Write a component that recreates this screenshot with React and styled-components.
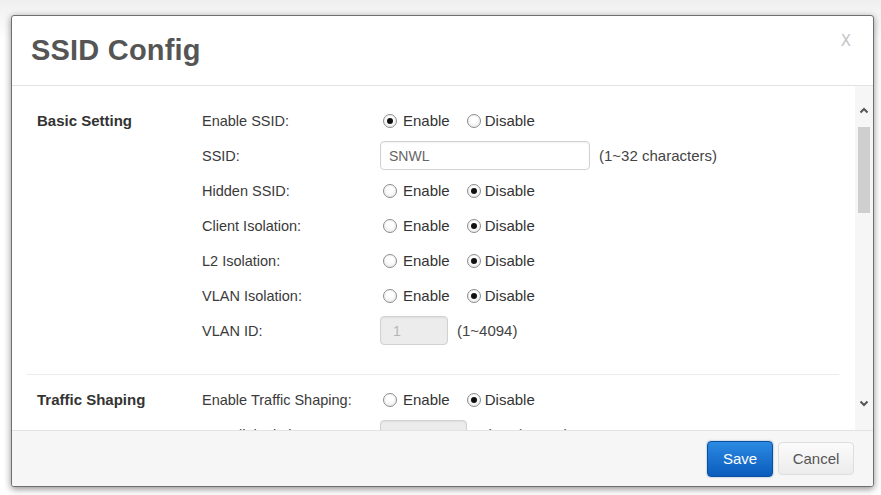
import React from "react";
import styled, { createGlobalStyle } from "styled-components";

const GlobalStyle = createGlobalStyle`
  html, body { margin: 0; padding: 0; background: #ffffff; }
  body { font-family: "Liberation Sans", Arial, sans-serif; color: #333; }
  * { box-sizing: border-box; }
`;

const Page = styled.div`
  width: 881px;
  height: 495px;
  padding: 15px 7px 8px 11px;
  background: linear-gradient(#efefef, #ffffff 40px);
`;

const Dialog = styled.div`
  width: 863px;
  height: 472px;
  display: flex;
  flex-direction: column;
  background: #fff;
  border: 1px solid #6f6f6f;
  border-radius: 3px;
  box-shadow: 0 2px 7px rgba(0, 0, 0, 0.45);
  overflow: hidden;
`;

const Header = styled.div`
  height: 70px;
  flex: none;
  display: flex;
  align-items: center;
  justify-content: space-between;
  padding: 0 22px 0 19px;
  border-bottom: 1px solid #e2e2e2;
`;

const Title = styled.h2`
  margin: 0;
  font-family: "Liberation Sans", Arial, sans-serif;
  font-weight: bold;
  font-size: 29px;
  color: #555;
  letter-spacing: 0.2px;
`;

const Close = styled.span`
  align-self: flex-start;
  margin-top: 16px;
  font-size: 15px;
  color: #c4c4c4;
  font-family: "DejaVu Sans", sans-serif;
`;

const Body = styled.div`
  flex: 1;
  min-height: 0;
  display: flex;
`;

const Content = styled.div`
  flex: 1;
  overflow: hidden;
`;

const Section = styled.div`
  display: flex;
  margin: 0 16px 0 15px;
  padding: ${(p) => p.$pad};
  border-bottom: ${(p) => (p.$divider ? "1px solid #ececec" : "none")};
`;

const SectionTitle = styled.div`
  width: 175px;
  flex: none;
  height: 35px;
  display: flex;
  align-items: center;
  padding-left: 10px;
  font-weight: bold;
  font-size: 15px;
  color: #333;
`;

const Fields = styled.div`
  display: flex;
  flex-direction: column;
`;

const Row = styled.div`
  height: 35px;
  display: flex;
  align-items: center;
`;

const Label = styled.div`
  width: 178px;
  flex: none;
  font-size: 14.5px;
  color: #3a3a3a;
`;

const Controls = styled.div`
  display: flex;
  align-items: center;
`;

const RadioOption = styled.label`
  display: flex;
  align-items: center;
  font-size: 15px;
  color: #333;
  margin-left: ${(p) => p.$ml}px;
`;

const Circle = styled.span`
  width: 14px;
  height: 14px;
  border-radius: 50%;
  border: 1px solid #8c8c8c;
  background: radial-gradient(circle at 50% 40%, #ffffff 30%, #e2e2e2 100%);
  display: flex;
  align-items: center;
  justify-content: center;
  margin-right: ${(p) => p.$gap}px;
  &::after {
    content: "";
    width: 6px;
    height: 6px;
    border-radius: 50%;
    background: ${(p) => (p.$checked ? "#111" : "transparent")};
  }
`;

const TextInput = styled.div`
  width: ${(p) => p.$w}px;
  height: 29px;
  border: 1px solid #d2d2d2;
  border-radius: 4px;
  background: ${(p) => (p.$disabled ? "#ececec" : "#fff")};
  box-shadow: inset 0 1px 2px rgba(0, 0, 0, 0.06);
  display: flex;
  align-items: center;
  padding-left: ${(p) => (p.$disabled ? 12 : 8)}px;
  font-size: 14px;
  color: ${(p) => (p.$disabled ? "#b5b5b5" : "#666")};
`;

const Hint = styled.span`
  margin-left: 9px;
  font-size: 15px;
  color: #444;
`;

const Scrollbar = styled.div`
  width: 18px;
  flex: none;
  background: #f6f6f6;
  display: flex;
  flex-direction: column;
  align-items: center;
`;

const ArrowButton = styled.div`
  height: ${(p) => p.$h}px;
  width: 100%;
  flex: none;
  display: flex;
  align-items: center;
  justify-content: center;
  padding-top: ${(p) => p.$pt || 0}px;
  padding-bottom: ${(p) => p.$pb || 0}px;
`;

const Track = styled.div`
  flex: 1;
  width: 100%;
  padding: 0 3px 0 3px;
`;

const Thumb = styled.div`
  height: 86px;
  background: #cfcfcf;
`;

const Footer = styled.div`
  height: 56px;
  flex: none;
  background: #f6f6f6;
  border-top: 1px solid #e3e3e3;
  display: flex;
  align-items: center;
  justify-content: flex-end;
  gap: 5px;
  padding-right: 19px;
`;

const Button = styled.button`
  font-family: "Liberation Sans", Arial, sans-serif;
  font-size: 15px;
  border-radius: 4px;
  cursor: pointer;
  padding: 0;
`;

const SaveButton = styled(Button)`
  width: 66px;
  height: 36px;
  color: #fff;
  border: 1px solid #0b4f9e;
  background: linear-gradient(#2b8ae2, #0a5cbc);
  box-shadow: 0 0 2px rgba(10, 80, 160, 0.5);
`;

const CancelButton = styled(Button)`
  width: 76px;
  height: 33px;
  color: #555;
  border: 1px solid #dedede;
  background: linear-gradient(#fbfbfb, #ececec);
`;

const Chevron = ({ up }) => (
  <svg width="10" height="7" viewBox="0 0 10 7">
    <polyline
      points={up ? "1.5,5.5 5,2 8.5,5.5" : "1.5,1.5 5,5 8.5,1.5"}
      fill="none"
      stroke="#555"
      strokeWidth="2"
    />
  </svg>
);

const Radio = ({ value }) => (
  <Controls>
    <RadioOption $ml={3}>
      <Circle $checked={value === "enable"} $gap={6} />
      Enable
    </RadioOption>
    <RadioOption $ml={17}>
      <Circle $checked={value === "disable"} $gap={4} />
      Disable
    </RadioOption>
  </Controls>
);

const basicRows = [
  { label: "Enable SSID:", type: "radio", value: "enable" },
  { label: "SSID:", type: "input", text: "SNWL", w: 210, hint: "(1~32 characters)" },
  { label: "Hidden SSID:", type: "radio", value: "disable" },
  { label: "Client Isolation:", type: "radio", value: "disable" },
  { label: "L2 Isolation:", type: "radio", value: "disable" },
  { label: "VLAN Isolation:", type: "radio", value: "disable" },
  { label: "VLAN ID:", type: "input", text: "1", w: 68, disabled: true, hint: "(1~4094)" },
];

const trafficRows = [
  { label: "Enable Traffic Shaping:", type: "radio", value: "disable" },
  { label: "Downlink Limit:", type: "input", text: "100", w: 87, disabled: true, hint: "Mbps  (1~300)" },
];

const FieldRow = ({ row }) => (
  <Row>
    <Label>{row.label}</Label>
    {row.type === "radio" ? (
      <Radio value={row.value} />
    ) : (
      <Controls>
        <TextInput $w={row.w} $disabled={row.disabled}>
          {row.text}
        </TextInput>
        <Hint>{row.hint}</Hint>
      </Controls>
    )}
  </Row>
);

export default function App() {
  return (
    <>
      <GlobalStyle />
      <Page>
        <Dialog>
          <Header>
            <Title>SSID Config</Title>
            <Close>X</Close>
          </Header>
          <Body>
            <Content>
              <Section $pad="17px 0 26px 0" $divider>
                <SectionTitle>Basic Setting</SectionTitle>
                <Fields>
                  {basicRows.map((r) => (
                    <FieldRow key={r.label} row={r} />
                  ))}
                </Fields>
              </Section>
              <Section $pad="7px 0 20px 0">
                <SectionTitle>Traffic Shaping</SectionTitle>
                <Fields>
                  {trafficRows.map((r) => (
                    <FieldRow key={r.label} row={r} />
                  ))}
                </Fields>
              </Section>
            </Content>
            <Scrollbar>
              <ArrowButton $h={41} $pt={8}>
                <Chevron up />
              </ArrowButton>
              <Track>
                <Thumb />
              </Track>
              <ArrowButton $h={40} $pb={14}>
                <Chevron />
              </ArrowButton>
            </Scrollbar>
          </Body>
          <Footer>
            <SaveButton>Save</SaveButton>
            <CancelButton>Cancel</CancelButton>
          </Footer>
        </Dialog>
      </Page>
    </>
  );
}
